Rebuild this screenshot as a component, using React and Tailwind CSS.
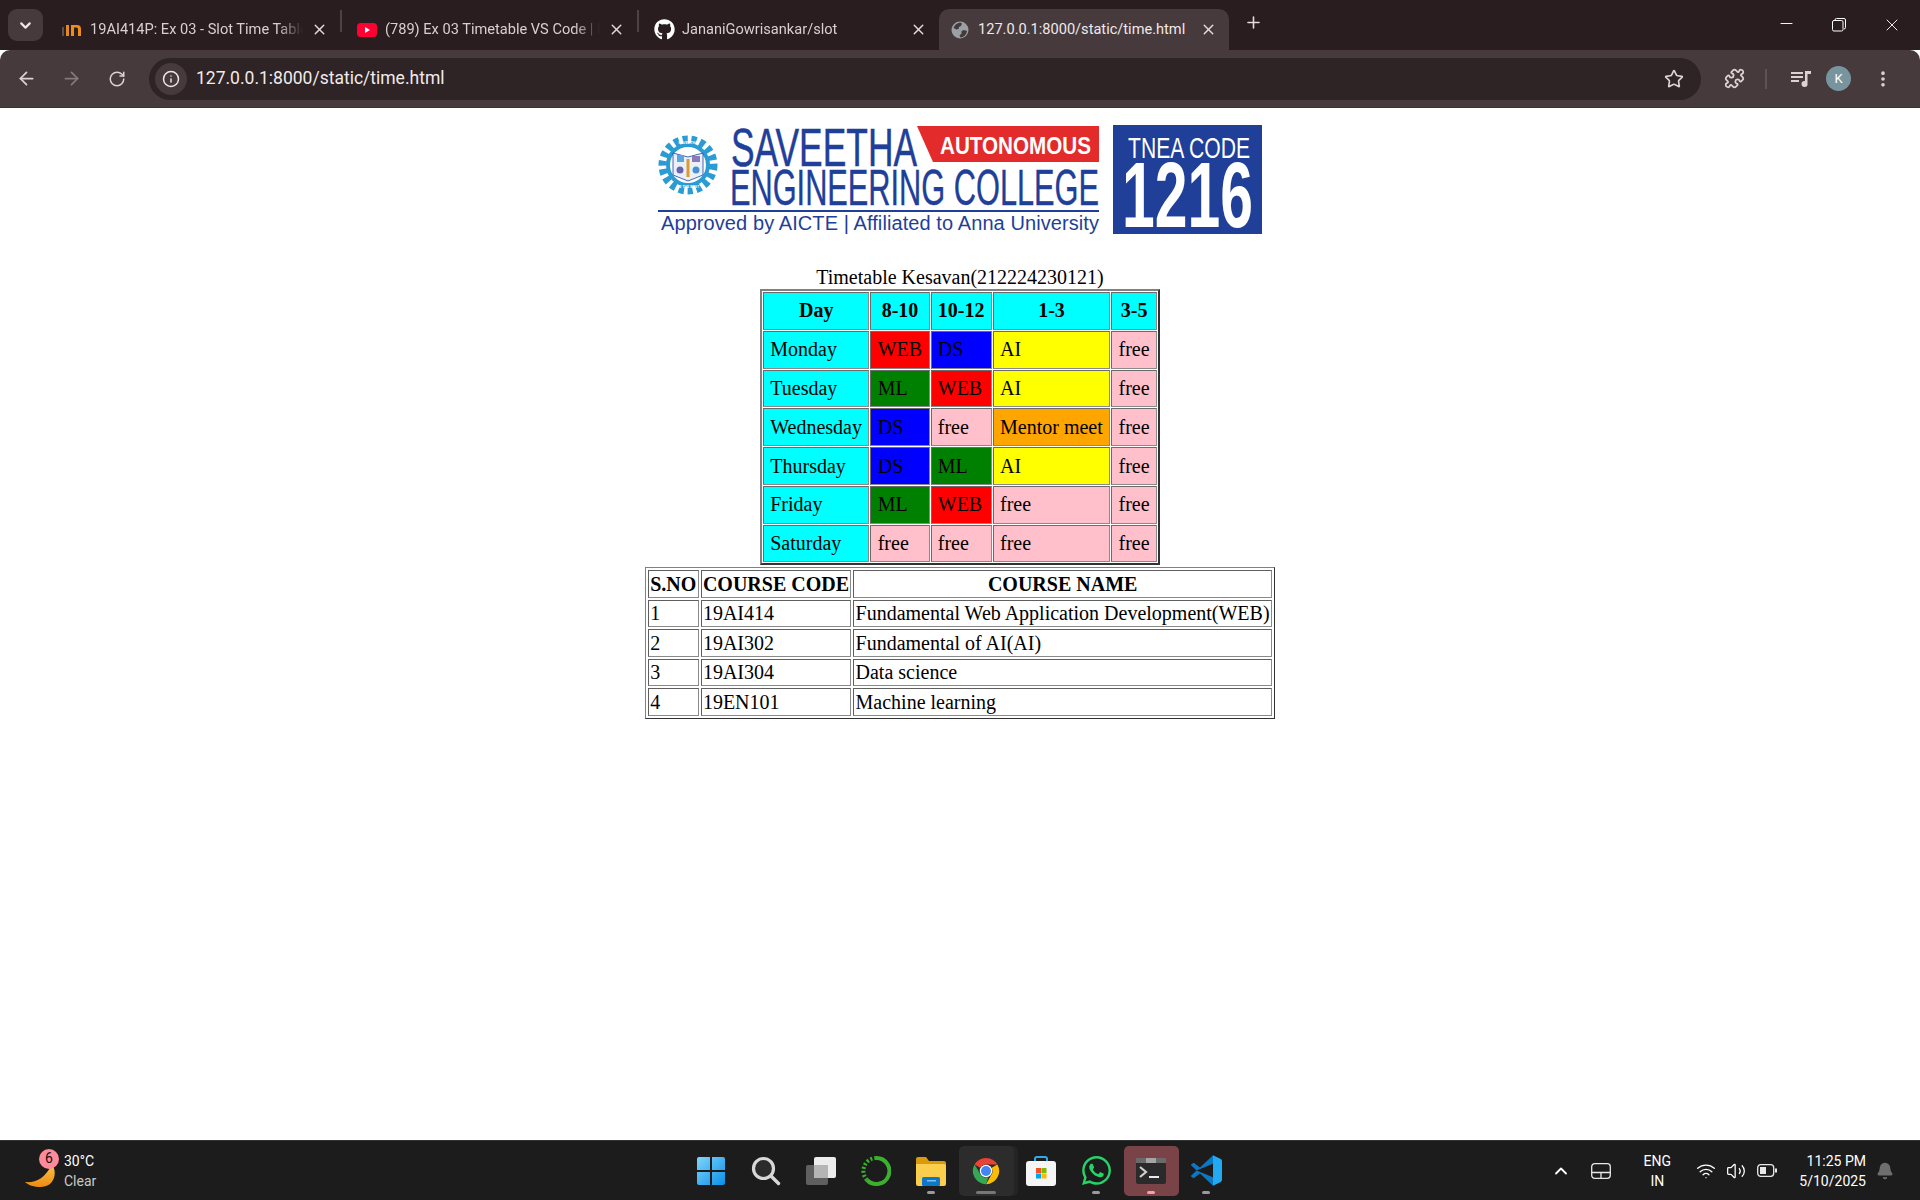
import React from "react";
import { ChevronDown, X, Plus, ArrowLeft, ArrowRight, RotateCw, Info, Star, Puzzle, EllipsisVertical, Minus, ChevronUp, Wifi, Volume2, Bell, Search } from "lucide-react";
import { FaGithub, FaWhatsapp } from "react-icons/fa";

const ui = { fontFamily: "Roboto, 'Noto Sans', sans-serif" };
const serif = { fontFamily: "'Liberation Serif', serif" };

const C = {
  c: "bg-[#00ffff]", r: "bg-[#ff0000]", b: "bg-[#0000ff]", g: "bg-[#008000]",
  y: "bg-[#ffff00]", p: "bg-[#ffc0cb]", o: "bg-[#ffa500]",
};

const rows = [
  [["Monday", "c"], ["WEB", "r"], ["DS", "b"], ["AI", "y"], ["free", "p"]],
  [["Tuesday", "c"], ["ML", "g"], ["WEB", "r"], ["AI", "y"], ["free", "p"]],
  [["Wednesday", "c"], ["DS", "b"], ["free", "p"], ["Mentor meet", "o"], ["free", "p"]],
  [["Thursday", "c"], ["DS", "b"], ["ML", "g"], ["AI", "y"], ["free", "p"]],
  [["Friday", "c"], ["ML", "g"], ["WEB", "r"], ["free", "p"], ["free", "p"]],
  [["Saturday", "c"], ["free", "p"], ["free", "p"], ["free", "p"], ["free", "p"]],
];

const courses = [
  ["1", "19AI414", "Fundamental Web Application Development(WEB)"],
  ["2", "19AI302", "Fundamental of AI(AI)"],
  ["3", "19AI304", "Data science"],
  ["4", "19EN101", "Machine learning"],
];

const cell1 = "border border-t-[#6b6b6b] border-l-[#6b6b6b] border-r-[#8a8a8a] border-b-[#8a8a8a] px-[6.25px] py-[6.4px] text-left font-normal text-black leading-[23px]";
const cell2 = "border border-t-[#5f5f5f] border-l-[#5f5f5f] border-r-[#8a8a8a] border-b-[#8a8a8a] px-[1.25px] py-[1.25px] text-left font-normal text-black leading-[23px]";

function Tab({ icon, title, active, w }) {
  return (
    <div className={`relative flex items-center h-[41px] shrink-0 ${w} ${active ? "bg-[#463a3d] rounded-t-[10px] pl-[10px]" : "pl-[14px]"}`}>
      <span className="w-[22px] h-[22px] flex items-center justify-center shrink-0">{icon}</span>
      <span className={`ml-[7px] flex-1 overflow-hidden whitespace-nowrap text-[14.6px] ${active ? "text-[#f0e8e9]" : "text-[#d9cfd1] [mask-image:linear-gradient(90deg,#000_88%,transparent)]"}`}>{title}</span>
      <span className="w-[24px] ml-[4px] mr-[9px] flex items-center justify-center shrink-0"><X size={17} strokeWidth={2} className="text-[#e5dadc]" /></span>
    </div>
  );
}

function Globe() {
  return (
    <svg width="18" height="18" viewBox="0 0 18 18">
      <circle cx="9" cy="9" r="8.5" fill="#9aa0a6" />
      <path d="M9 1.5 C6 2 3.5 4 2.5 7 L5.5 8.5 L7.5 8 L8 6 L10 5 L11 2.5 Z M16 10 L13 9 L10.5 10 L10.5 12.5 L8.5 14.5 L9.5 16.5 C13 16.4 15.5 13.5 16 10 Z" fill="#463a3d" />
    </svg>
  );
}

function Logo() {
  const blue = "#1f3f99";
  const f = "'Liberation Sans', sans-serif";
  return (
    <svg width="604" height="110" viewBox="0 0 604 110" className="block">
      <circle cx="30" cy="40" r="25" fill="none" stroke="#2b9bd3" strokeWidth="9" strokeDasharray="5 3.6" />
      <circle cx="30" cy="40" r="22" fill="#2b9bd3" />
      <circle cx="30" cy="40" r="18" fill="#ffffff" />
      <text x="30" y="19" textAnchor="middle" fontSize="3.6" fontWeight="700" fill="#ffffff" fontFamily={f}>SAVEETHA</text>
      <path d="M15 28 L30 32 L45 28 L45 50 L30 56 L15 50 Z" fill="#e8f1fa" stroke="#1f3f99" strokeWidth="0.8" />
      <rect x="19" y="30" width="7" height="7" fill="#5aa6dd" />
      <rect x="34" y="31" width="8" height="6" fill="#8a7ab8" />
      <circle cx="22" cy="45" r="3.5" fill="#6b62ad" />
      <circle cx="38" cy="45" r="3.5" fill="#4a8fcf" />
      <rect x="28.5" y="34" width="3" height="18" fill="#e09a2b" />
      <text x="30" y="63" textAnchor="middle" fontSize="3.4" fontWeight="700" fill="#ffffff" fontFamily={f}>BE THE BEST</text>
      <polygon points="259,1 441,1 441,37 275,37" fill="#e32b2b" />
      <text x="282" y="28.5" fontSize="24" fontWeight="700" fill="#ffffff" fontFamily={f} textLength="151" lengthAdjust="spacingAndGlyphs">AUTONOMOUS</text>
      <text x="73" y="41" fontSize="53" fill={blue} stroke={blue} strokeWidth="0.5" fontFamily={f} textLength="186" lengthAdjust="spacingAndGlyphs">SAVEETHA</text>
      <text x="72" y="80" fontSize="50" fill={blue} stroke={blue} strokeWidth="0.4" fontFamily={f} textLength="369" lengthAdjust="spacingAndGlyphs">ENGINEERING COLLEGE</text>
      <rect x="0" y="85" width="441" height="2" fill={blue} />
      <text x="3" y="105" fontSize="20" fill={blue} fontFamily={f} textLength="438" lengthAdjust="spacing">Approved by AICTE  |  Affiliated to Anna University</text>
      <rect x="455" y="0" width="149" height="109" fill={blue} />
      <text x="470" y="33" fontSize="29" fill="#ffffff" fontFamily={f} textLength="122" lengthAdjust="spacingAndGlyphs">TNEA CODE</text>
      <text x="464" y="102" fontSize="92" fontWeight="700" fill="#ffffff" fontFamily={f} textLength="131" lengthAdjust="spacingAndGlyphs">1216</text>
    </svg>
  );
}

function Tile({ children, bg, dot }) {
  return (
    <div className={`relative w-[55px] h-[50px] flex items-center justify-center rounded-[5px] ${bg || ""}`}>
      {children}
      {dot && <span className={`absolute bottom-[2px] left-1/2 -translate-x-1/2 h-[3px] rounded-full ${dot}`} />}
    </div>
  );
}

function Chrome() {
  return (
    <svg width="30" height="30" viewBox="0 0 48 48">
      <path d="M24 3 A21 21 0 0 1 42.2 13.5 L24 13.5 A10.5 10.5 0 0 0 14.9 18.8 L5.8 13.5 A21 21 0 0 1 24 3Z" fill="#ea4335" />
      <path d="M42.2 13.5 A21 21 0 0 1 24 45 L33.1 29.2 A10.5 10.5 0 0 0 33.1 18.8 Z" fill="#fbbc04" />
      <path d="M5.8 13.5 L14.9 29.2 A10.5 10.5 0 0 0 28 33.7 L24 45 A21 21 0 0 1 5.8 13.5Z" fill="#34a853" />
      <circle cx="24" cy="24" r="10" fill="#fff" />
      <circle cx="24" cy="24" r="8" fill="#4285f4" />
    </svg>
  );
}

export default function App() {
  return (
    <div className="w-[1920px] h-[1200px] flex flex-col overflow-hidden bg-white" style={ui}>
      {/* tab strip */}
      <div className="h-[50px] bg-[#291d20] flex items-end shrink-0 relative">
        <div className="flex items-end flex-1 h-full pl-[8px]">
          <div className="self-start mt-[9px] w-[35px] h-[32px] rounded-[9px] bg-[#463a3d] flex items-center justify-center shrink-0">
            <ChevronDown size={17} strokeWidth={3} className="text-[#efe6e8]" />
          </div>
          <div className="w-[4px] shrink-0" />
          <Tab w="w-[293px]" title="19AI414P: Ex 03 - Slot Time Table" icon={
            <svg width="22" height="16" viewBox="0 0 22 16"><rect x="1" y="5" width="2" height="9" fill="#555" /><rect x="5" y="3" width="3" height="11" fill="#e08a20" /><path d="M10 14 V3 H16 Q20 3 20 7 V14 H17 V7 Q17 5.5 15.5 5.5 H13 V14 Z" fill="#f08d19" /></svg>
          } />
          <div className="self-center w-[2px] h-[22px] bg-[#4e4245] shrink-0 mt-[-8px]" />
          <Tab w="w-[295px]" title="(789) Ex 03 Timetable VS Code | Python" icon={
            <svg width="20" height="14" viewBox="0 0 20 14"><rect width="20" height="14" rx="3.5" fill="#ff0033" /><path d="M8 4 L13 7 L8 10 Z" fill="#fff" /></svg>
          } />
          <div className="self-center w-[2px] h-[22px] bg-[#4e4245] shrink-0 mt-[-8px]" />
          <Tab w="w-[300px]" title="JananiGowrisankar/slot" icon={<FaGithub size={21} className="text-white" />} />
          <Tab w="w-[290px]" active title="127.0.0.1:8000/static/time.html" icon={<Globe />} />
          <div className="self-start mt-[13px] ml-[12px] w-[24px] flex justify-center"><Plus size={19} strokeWidth={2} className="text-[#e5dadc]" /></div>
        </div>
        <div className="flex h-full items-center pr-[8px] gap-[36px] text-white">
          <Minus size={19} strokeWidth={1.2} className="mt-[-4px]" />
          <svg width="14" height="14" viewBox="0 0 14 14" fill="none" stroke="#fff" strokeWidth="1" className="mt-[-1px]"><rect x="0.5" y="2.5" width="10.5" height="10.5" rx="1.5" /><path d="M3 2 Q3 0.5 4.5 0.5 H12 Q13.5 0.5 13.5 2 V9.5 Q13.5 11 12 11" /></svg>
          <X size={20} strokeWidth={1.1} className="mr-[10px]" />
        </div>
      </div>

      {/* toolbar */}
      <div className="h-[58px] bg-[#463a3d] rounded-t-[10px] flex items-center shrink-0 pl-[14px] pr-[16px] border-b border-b-[#3b3033]">
        <ArrowLeft size={21} strokeWidth={2} className="text-[#dcd1d3] ml-[2px]" />
        <ArrowRight size={21} strokeWidth={2} className="text-[#85797c] ml-[24px]" />
        <RotateCw size={18} strokeWidth={2} className="text-[#dcd1d3] ml-[26px]" />
        <div className="ml-[23px] w-[1552px] h-[42px] rounded-full bg-[#2e2325] flex items-center pl-[6px] pr-[17px] shrink-0">
          <div className="w-[32px] h-[32px] rounded-full bg-[#463a3d] flex items-center justify-center shrink-0">
            <Info size={18} strokeWidth={2} className="text-[#efe6e8]" />
          </div>
          <span className="ml-[9px] text-[17.5px] text-[#f2eaeb] flex-1">127.0.0.1:8000/static/time.html</span>
          <Star size={20} strokeWidth={2} className="text-[#dcd1d3]" />
        </div>
        <Puzzle size={21} strokeWidth={2} className="text-[#dcd1d3] ml-[23px]" />
        <span className="w-[2px] h-[20px] bg-[#5f5255] ml-[20px]" />
        <svg width="21" height="18" viewBox="0 0 21 18" className="ml-[24px]" fill="#dcd1d3"><rect x="0" y="2" width="12" height="2" /><rect x="0" y="6" width="12" height="2" /><rect x="0" y="10" width="8" height="2" /><path d="M14 1 H20 V4 H16.5 V13.5 A3 3 0 1 1 14 11 Z" /></svg>
        <div className="ml-[14px] w-[25px] h-[25px] rounded-full bg-[#78959f] flex items-center justify-center text-white text-[13px]">K</div>
        <EllipsisVertical size={20} strokeWidth={2.4} className="text-[#dcd1d3] ml-[22px]" />
      </div>

      {/* page */}
      <main className="flex-1 bg-white flex flex-col items-center pt-[17px] text-[20px] text-black" style={serif}>
        <Logo />
        <table className="mt-[31px] border-separate border-[2.5px] border-t-[#808080] border-l-[#808080] border-r-[#333333] border-b-[#333333] [border-spacing:1.25px] w-[400px]">
          <caption className="leading-[23px] text-center">Timetable Kesavan(212224230121)</caption>
          <thead>
            <tr>
              {["Day", "8-10", "10-12", "1-3", "3-5"].map((h) => (
                <th key={h} className={`${cell1} ${C.c} !text-center !font-bold`}>{h}</th>
              ))}
            </tr>
          </thead>
          <tbody>
            {rows.map((r) => (
              <tr key={r[0][0]}>
                {r.map(([t, k], i) => (
                  <td key={i} className={`${cell1} ${C[k]}`}>{t}</td>
                ))}
              </tr>
            ))}
          </tbody>
        </table>
        <table className="mt-[2px] border-separate border border-t-[#808080] border-l-[#808080] border-r-[#333333] border-b-[#333333] [border-spacing:2.5px] w-[630px]">
          <thead>
            <tr>
              {["S.NO", "COURSE CODE", "COURSE NAME"].map((h) => (
                <th key={h} className={`${cell2} !text-center !font-bold`}>{h}</th>
              ))}
            </tr>
          </thead>
          <tbody>
            {courses.map((r) => (
              <tr key={r[0]}>
                {r.map((t, i) => (
                  <td key={i} className={cell2}>{t}</td>
                ))}
              </tr>
            ))}
          </tbody>
        </table>
      </main>

      {/* taskbar */}
      <div className="h-[60px] bg-[#1c1c1c] border-t border-t-[#333333] flex items-center shrink-0">
        <div className="flex-1 flex items-center pl-[25px]">
          <div className="relative w-[34px] h-[40px] shrink-0">
            <svg width="32" height="30" viewBox="0 0 32 30" className="absolute left-0 top-[8px]">
              <defs><linearGradient id="moon" x1="0" y1="0" x2="0" y2="1"><stop offset="0" stopColor="#f7c548" /><stop offset="1" stopColor="#ee8a12" /></linearGradient></defs>
              <path d="M0 23 C10 24 20 20 27 5 C33 14 29 28 16 28 C9 28 3 26 0 23 Z" fill="url(#moon)" />
            </svg>
            <span className="absolute left-[14px] top-[-2px] w-[20px] h-[20px] rounded-full bg-[#ff8a9a] text-[#111] text-[14px] flex items-center justify-center">6</span>
          </div>
          <div className="ml-[5px] flex flex-col text-[14px] leading-[20px]">
            <span className="text-white">30°C</span>
            <span className="text-[#c8c8c8]">Clear</span>
          </div>
        </div>
        <div className="flex items-center shrink-0 ml-[-2px]">
          <Tile>
            <svg width="30" height="30" viewBox="0 0 30 30"><defs><linearGradient id="win" x1="0" y1="0" x2="1" y2="1"><stop offset="0" stopColor="#7fd6fb" /><stop offset="1" stopColor="#0a8fe8" /></linearGradient></defs><path d="M1 3 Q1 1 3 1 H14 V14 H1 Z M16 1 H27 Q29 1 29 3 V14 H16 Z M1 16 H14 V29 H3 Q1 29 1 27 Z M16 16 H29 V27 Q29 29 27 29 H16 Z" fill="url(#win)" /></svg>
          </Tile>
          <Tile>
            <svg width="30" height="30" viewBox="0 0 30 30" fill="none"><circle cx="12.5" cy="12.5" r="10" stroke="#d8d8d8" strokeWidth="3.2" fill="#2b2b2b" /><path d="M20 20 L27.5 27.5" stroke="#d8d8d8" strokeWidth="3.4" strokeLinecap="round" /></svg>
          </Tile>
          <Tile>
            <svg width="30" height="28" viewBox="0 0 30 28"><rect x="8" y="0" width="22" height="21" rx="2" fill="#ececec" /><rect x="0" y="8" width="22" height="20" rx="2" fill="#5f5f5f" /><rect x="8" y="8" width="14" height="13" fill="#b5b5b5" /></svg>
          </Tile>
          <Tile>
            <svg width="30" height="32" viewBox="0 0 30 32" fill="none"><path d="M15 3 A13 13 0 1 1 6 25" stroke="#3bb02f" strokeWidth="4" /><path d="M6 25 A13 13 0 0 1 15 3" stroke="#3bb02f" strokeWidth="4" strokeDasharray="2 2" /></svg>
          </Tile>
          <Tile dot="w-[8px] bg-[#9a9a9a]">
            <svg width="30" height="30" viewBox="0 0 30 30"><path d="M0 3 Q0 1 2 1 H10 L13 5 H28 Q30 5 30 7 V10 H0 Z" fill="#d99a0b" /><path d="M0 8 H28 Q30 8 30 10 V28 Q30 30 28 30 H2 Q0 30 0 28 Z" fill="#fbce4e" /><rect x="6" y="21" width="18" height="9" rx="1.5" fill="#1076c9" /><rect x="11" y="24" width="9" height="1.5" fill="#7cc2f2" /></svg>
          </Tile>
          <Tile bg="bg-[#2c2c2c] shadow-[4px_0_0_#242424]" dot="w-[20px] bg-[#777777]">
            <Chrome />
          </Tile>
          <Tile>
            <svg width="30" height="32" viewBox="0 0 30 32"><path d="M9 7 V4 Q9 2 11 2 H19 Q21 2 21 4 V7" fill="none" stroke="#35a7e8" strokeWidth="2" /><rect x="0" y="6" width="30" height="25" rx="3" fill="#f5f5f5" /><rect x="10" y="13" width="5" height="5" fill="#f25022" /><rect x="15.5" y="13" width="5" height="5" fill="#7fba00" /><rect x="10" y="18.5" width="5" height="5" fill="#00a4ef" /><rect x="15.5" y="18.5" width="5" height="5" fill="#ffb900" /></svg>
          </Tile>
          <Tile dot="w-[8px] bg-[#9a9a9a]">
            <FaWhatsapp size={33} className="text-[#25d366]" />
          </Tile>
          <Tile bg="bg-[#7a4347]" dot="w-[8px] bg-[#ff9aa8]">
            <svg width="30" height="26" viewBox="0 0 30 26"><rect width="30" height="26" rx="2" fill="#2a2a2a" /><rect width="30" height="5" fill="#6a6a6a" /><rect x="10" width="10" height="5" fill="#a5a5a5" /><path d="M4 9 L10 14 L4 19" fill="none" stroke="#d0d0d0" strokeWidth="2.2" /><rect x="13" y="18" width="10" height="2" fill="#e8e8e8" /></svg>
          </Tile>
          <Tile dot="w-[8px] bg-[#9a9a9a]">
            <svg width="31" height="31" viewBox="0 0 100 100"><path d="M71 99 L96 87 Q100 85 100 80 V20 Q100 15 96 13 L71 1 Z" fill="#23a9f2" /><path d="M71 1 L29 40 L9 25 L1 30 Q-1 32 1 34 L18 50 L71 28 Z" fill="#0a78c2" /><path d="M71 99 L29 60 L9 75 L1 70 Q-1 68 1 66 L18 50 L71 72 Z" fill="#0a78c2" /><path d="M71 28 V72 L42 50 Z" fill="#1c1c1c" /></svg>
          </Tile>
        </div>
        <div className="flex-1 flex items-center justify-end text-white pr-[26px]">
          <ChevronUp size={20} strokeWidth={2.2} className="mr-[20px]" />
          <svg width="20" height="16" viewBox="0 0 20 16" fill="none" stroke="#e8e8e8" strokeWidth="1.3" className="mr-[24px]"><rect x="0.7" y="0.7" width="18.6" height="14.6" rx="3" /><path d="M0.7 9.5 H19.3 M10 9.5 V15.3" /></svg>
          <div className="w-[44px] text-center text-[14px] leading-[20px] mr-[17px]">ENG<br />IN</div>
          <Wifi size={20} strokeWidth={1.6} className="mr-[10px]" />
          <Volume2 size={20} strokeWidth={1.5} className="mr-[11px]" />
          <svg width="20" height="13" viewBox="0 0 20 13" fill="none" className="mr-[22px]"><rect x="0.7" y="0.7" width="16" height="11.6" rx="3" stroke="#e8e8e8" strokeWidth="1.3" /><rect x="3" y="3" width="6" height="7" fill="#e8e8e8" /><rect x="18" y="4.5" width="2" height="4" fill="#e8e8e8" /></svg>
          <div className="text-right text-[14px] leading-[20px]">11:25 PM<br />5/10/2025</div>
          <Bell size={18} fill="#6f6f6f" stroke="#6f6f6f" className="ml-[10px]" />
        </div>
      </div>
    </div>
  );
}
